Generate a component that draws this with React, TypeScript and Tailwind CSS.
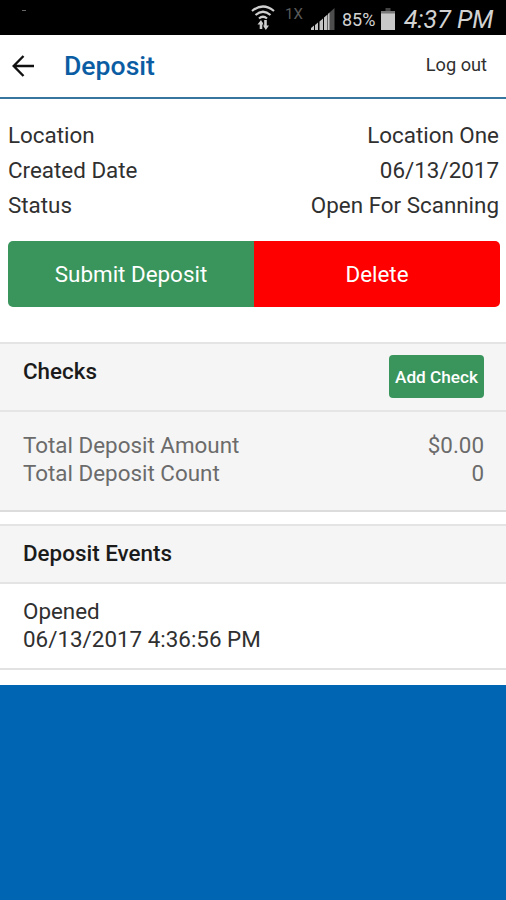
import React from "react";

const summary = [
  { label: "Location", value: "Location One" },
  { label: "Created Date", value: "06/13/2017" },
  { label: "Status", value: "Open For Scanning" },
];

const totals = [
  { label: "Total Deposit Amount", value: "$0.00" },
  { label: "Total Deposit Count", value: "0" },
];

function WifiIcon() {
  return (
    <svg className="ml-[251px] h-7 w-6 shrink-0" viewBox="0 0 24 28" fill="none" stroke="#cfcfcf" strokeWidth="2.200">
      <path d="M1 7Q12 -2 23 7" />
      <path d="M4.500 11Q12 4.500 19.500 11" />
      <path d="M8 14.500Q12 11 16 14.500" />
      <path d="M10 25v-7M14.500 16v7" strokeWidth="2.600" />
      <path d="M6.500 20.500L10 16l2.500 4.500zM12 21.500h6L14.800 26z" fill="#cfcfcf" stroke="none" />
    </svg>
  );
}

function SignalIcon() {
  return (
    <svg className="ml-2 mt-0.5 h-6 w-6 shrink-0" viewBox="0 0 24 24">
      <path d="M17.500 6.500L23.500 1V23H17.500z" fill="#4d4d4d" />
      <path d="M0 21l3-2.500V23H0zM4 18l3-2.500V23H4zM8.500 14.500l3.500-3V23H8.500zM13 10.500l3.500-3V23H13zM17 7l1.500-1.500V23H17z" fill="#c4c4c4" />
    </svg>
  );
}

function BatteryIcon() {
  return (
    <svg className="ml-[3px] mt-0.5 h-6 w-4 shrink-0" viewBox="0 0 16 24">
      <path d="M5.500 1h5v3h-5z" fill="#444" />
      <path d="M1 4h14v3H1z" fill="#777" />
      <path d="M1 6.500h14V23H1z" fill="#c8c8c8" />
    </svg>
  );
}

function StatusBar() {
  return (
    <div className="flex h-[35px] items-center bg-black text-[#d2d2d2]">
      <div className="relative flex w-full items-center">
        <span className="absolute left-[22px] top-[6px] h-px w-1 bg-[#666]" />
        <WifiIcon />
        <span className="mb-2 ml-[10px] w-[18px] text-[15px] leading-4 text-[#5a5a5a]">1X</span>
        <SignalIcon />
        <span className="ml-[7px] w-[35px] whitespace-nowrap pt-1 text-[18px] leading-5">85%</span>
        <BatteryIcon />
        <span className="ml-2 whitespace-nowrap pt-1 text-[25px] italic leading-6">4:37 PM</span>
      </div>
    </div>
  );
}

export default function App() {
  return (
    <div className="flex h-[900px] w-[506px] flex-col overflow-hidden bg-[#0066b3] font-[Roboto,sans-serif] text-[22.4px] text-[#303030]">
      <StatusBar />
      <header className="flex h-16 items-center border-b-2 border-[#37769f] bg-white">
        <svg className="ml-3 h-[22px] w-[22px]" viewBox="0 0 22 22" fill="none" stroke="#111" strokeWidth="2.400">
          <path d="M11.500 1L1.700 11l9.800 10M1.700 11H22" />
        </svg>
        <h1 className="ml-[30px] text-[26.6px] font-medium leading-8 text-[#0b5da3]">Deposit</h1>
        <button className="-mt-0.5 ml-auto mr-[19px] text-[18.2px] leading-6">Log out</button>
      </header>

      <section className="h-[243px] bg-white px-2 pt-[19px]">
        {summary.map((row) => (
          <div key={row.label} className="flex justify-between leading-[35px]">
            <span>{row.label}</span>
            <span className="-mr-px">{row.value}</span>
          </div>
        ))}
        <div className="-mr-0.5 mt-[18px] flex h-[66px] overflow-hidden rounded-[5px] text-white">
          <button className="flex-1 bg-[#3a955d] pt-0.5">Submit Deposit</button>
          <button className="flex-1 bg-[#fe0000] pt-0.5">Delete</button>
        </div>
      </section>

      <section className="h-[170px] border-y-2 border-b-[#dcdcdc] border-t-[#e4e4e4] bg-[#f5f5f5]">
        <div className="flex h-[68px] justify-between border-b-2 border-[#e5e5e5] pl-[23px] pr-[22px]">
          <h2 className="pt-[11px] font-medium leading-8 text-[#1b1b1b]">Checks</h2>
          <button className="mt-[11px] h-[43px] w-[95px] whitespace-nowrap rounded-[4px] bg-[#3a955d] pt-0.5 text-[17.2px] font-medium text-white">Add Check</button>
        </div>
        <div className="pl-[23px] pr-[22px] pt-[19px] text-[#6b6b6b]">
          {totals.map((row) => (
            <div key={row.label} className="flex justify-between leading-7">
              <span>{row.label}</span>
              <span>{row.value}</span>
            </div>
          ))}
        </div>
      </section>

      <section className="h-[173px] border-t-[12px] border-white bg-white">
        <h2 className="h-[60px] border-y-2 border-[#e4e4e4] bg-[#f5f5f5] pl-[23px] font-medium leading-[54px] text-[#1b1b1b]">Deposit Events</h2>
        <div className="h-[86px] border-b-2 border-[#e2e2e2] pl-[23px] pt-[13px] leading-7">
          <p>Opened</p>
          <p>06/13/2017 4:36:56 PM</p>
        </div>
      </section>
    </div>
  );
}
